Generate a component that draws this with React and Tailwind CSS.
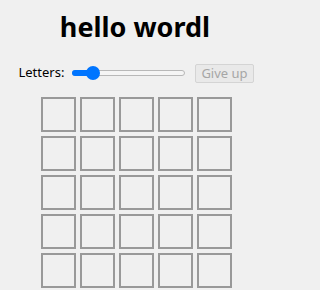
import React from "react";

function Slider() {
  return (
    <div className="relative w-[113px] h-[14px] flex items-center">
      <div className="w-full h-[6px] rounded-full border border-[#b8b8b8] bg-[#f5f5f5]"></div>
      <div className="absolute left-0 top-[4px] w-[22px] h-[6px] rounded-l-full bg-[#0075ff]"></div>
      <div className="absolute left-[14px] top-0 w-[14px] h-[14px] rounded-full bg-[#0075ff]"></div>
    </div>
  );
}

export default function App() {
  const rows = [0, 1, 2, 3, 4];
  const cols = [0, 1, 2, 3, 4];
  return (
    <div className="min-h-[290px] w-full bg-[#f0f0f0]" style={{ fontFamily: '"Noto Sans", "Open Sans", sans-serif' }}>
      <div className="w-[270px] flex flex-col items-center overflow-hidden">
        <h1 className="mt-[10px] text-[27px] leading-[34px] font-bold text-black">hello wordl</h1>
        <div className="mt-[19px] flex items-center h-[20px] text-[13px] text-black translate-x-[1px]">
          <span className="mr-[8px]">Letters:</span>
          <Slider />
          <button disabled className="ml-[10px] h-[19px] px-[5px] border border-[#d4d4d4] bg-[#e9e9e9] text-[#a6a6a6] rounded-[2px] text-[13px] leading-none">Give up</button>
        </div>
        <div className="mt-[14px] grid grid-cols-5 gap-[4px] translate-x-[1px]">
          {rows.map((r) =>
            cols.map((c) => (
              <div key={`${r}-${c}`} className="w-[35px] h-[35px] border-2 border-[#999999]"></div>
            ))
          )}
        </div>
      </div>
    </div>
  );
}
